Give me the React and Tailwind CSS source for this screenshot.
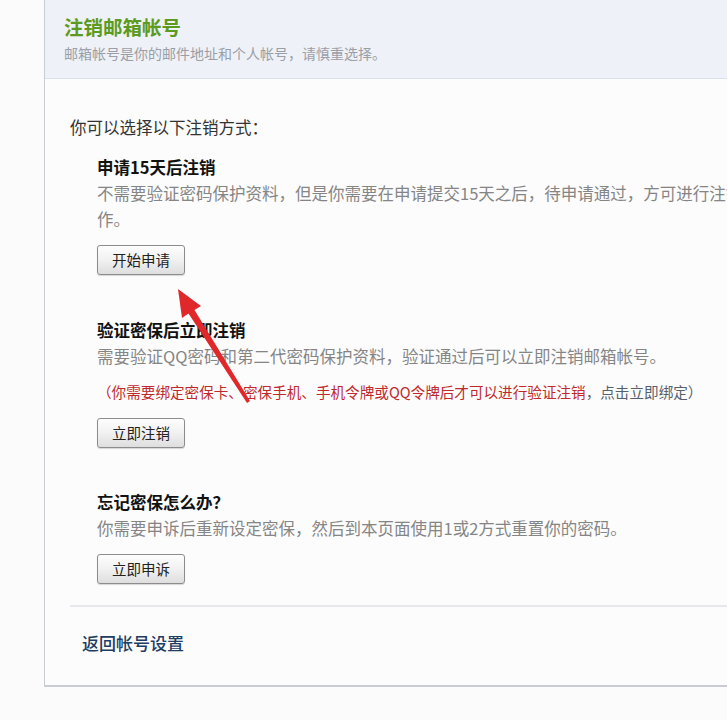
import React from "react";

const font = { fontFamily: '"Noto Sans CJK SC", "Noto Sans", sans-serif' };

function Btn({ children }) {
  return (
    <button className="h-[30px] w-[88px] rounded-[3px] border border-[#8c8c8c] bg-gradient-to-b from-[#fdfdfd] via-[#f1f1f1] to-[#dedede] text-[14.5px] text-[#222] shadow-[0_1px_1px_rgba(0,0,0,0.15)] leading-none">
      {children}
    </button>
  );
}

export default function App() {
  return (
    <div className="relative flex h-[720px] w-[727px] overflow-hidden bg-[#fbfbfb]" style={font}>
      <div className="w-[44px] shrink-0" />
      <div className="flex h-[687px] w-[800px] shrink-0 flex-col border-b-2 border-l border-[#c9cdd3] bg-[#fcfcfd]">
        <div className="h-[79px] shrink-0 border-b border-[#dbe1ea] bg-[#eef1f7] pl-[19px] pt-[14px]">
          <div className="text-[19.5px] font-bold leading-[26px] text-[#5c9a20]">注销邮箱帐号</div>
          <div className="mt-[3px] text-[14px] leading-[20px] text-[#9a9ea6]">邮箱帐号是你的邮件地址和个人帐号，请慎重选择。</div>
        </div>
        <div className="pl-[25px] pt-[35px]">
          <div className="text-[16.5px] leading-[26px] text-[#333]">你可以选择以下注销方式：</div>
          <div className="ml-[27px] mt-[14px]">
            <div className="text-[16.5px] font-bold leading-[26px] text-[#111]">申请15天后注销</div>
            <div className="text-[16.5px] leading-[26px] text-[#858585]">
              <div className="whitespace-nowrap">不需要验证密码保护资料，但是你需要在申请提交15天之后，待申请通过，方可进行注销操</div>
              <div>作。</div>
            </div>
            <div className="mt-[13px]"><Btn>开始申请</Btn></div>

            <div className="mt-[42px] text-[16.5px] font-bold leading-[26px] text-[#111]">验证密保后立即注销</div>
            <div className="text-[16.5px] leading-[26px] text-[#858585]">需要验证QQ密码和第二代密码保护资料，验证通过后可以立即注销邮箱帐号。</div>
            <div className="mt-[10px] whitespace-nowrap text-[14.6px] leading-[26px]">
              <span className="text-[#c0282b]">（你需要绑定密保卡、密保手机、手机令牌或QQ令牌后才可以进行验证注销</span>
              <span className="text-[#55606c]">，点击立即绑定）</span>
            </div>
            <div className="mt-[13px]"><Btn>立即注销</Btn></div>

            <div className="mt-[41px] text-[16.5px] font-bold leading-[26px] text-[#111]">忘记密保怎么办？</div>
            <div className="text-[16.5px] leading-[26px] text-[#858585]">你需要申诉后重新设定密保，然后到本页面使用1或2方式重置你的密码。</div>
            <div className="mt-[13px]"><Btn>立即申诉</Btn></div>
          </div>
          <div className="mt-[21px] h-[2px] bg-[#e6e8ec]" />
          <div className="mt-[23px] pl-[12px] text-[17px] font-medium leading-[26px] text-[#1e3d62]">返回帐号设置</div>
        </div>
      </div>
      <svg className="pointer-events-none absolute left-0 top-0" width="727" height="720" viewBox="0 0 727 720">
        <polygon
          points="178,289 201,306 194.5,310 250,401 247,403 188.5,313.5 182,318"
          fill="#e0282b"
        />
      </svg>
    </div>
  );
}
